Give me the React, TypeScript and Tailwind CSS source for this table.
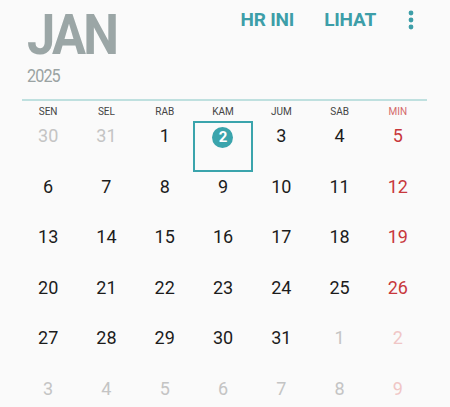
const days = ["SEN", "SEL", "RAB", "KAM", "JUM", "SAB", "MIN"];

type Cell = { n: number; muted?: boolean; today?: boolean };

const weeks: Cell[][] = [
  [{ n: 30, muted: true }, { n: 31, muted: true }, { n: 1 }, { n: 2, today: true }, { n: 3 }, { n: 4 }, { n: 5 }],
  [{ n: 6 }, { n: 7 }, { n: 8 }, { n: 9 }, { n: 10 }, { n: 11 }, { n: 12 }],
  [{ n: 13 }, { n: 14 }, { n: 15 }, { n: 16 }, { n: 17 }, { n: 18 }, { n: 19 }],
  [{ n: 20 }, { n: 21 }, { n: 22 }, { n: 23 }, { n: 24 }, { n: 25 }, { n: 26 }],
  [{ n: 27 }, { n: 28 }, { n: 29 }, { n: 30 }, { n: 31 }, { n: 1, muted: true }, { n: 2, muted: true }],
  [{ n: 3, muted: true }, { n: 4, muted: true }, { n: 5, muted: true }, { n: 6, muted: true }, { n: 7, muted: true }, { n: 8, muted: true }, { n: 9, muted: true }],
];

function numColor(c: Cell, col: number) {
  if (col === 6) return c.muted ? "text-[#f0c6c6]" : "text-[#c8383c]";
  return c.muted ? "text-[#c4c4c4]" : "text-[#1c1c1c]";
}

export default function App() {
  return (
    <div className="w-[450px] h-[407px] overflow-hidden bg-[#fafafa] font-['Roboto',sans-serif]">
      {/* header */}
      <div className="flex items-start h-[99px] pl-[27px] pr-[36px]">
        <div className="flex flex-col">
          <div className="mt-[8px] text-[55px] leading-none font-bold text-[#9ba6a6] tracking-[-3px] scale-x-[0.92] origin-left">
            JAN
          </div>
          <div className="mt-[4px] text-[18px] leading-none text-[#9aa3a3] tracking-[-1px] scale-x-[0.9] origin-left">2025</div>
        </div>
        <div className="ml-auto flex items-center gap-[30px] mt-[10px]">
          <span className="text-[19px] leading-[20px] font-bold text-[#3d9ea8] tracking-[-0.2px]">HR INI</span>
          <span className="text-[19px] leading-[20px] font-bold text-[#3d9ea8] tracking-[-0.2px]">LIHAT</span>
          <svg width="6" height="20" viewBox="0 0 6 20" className="ml-[2px]">
            <circle cx="3" cy="3" r="2.4" fill="#3d9ea8" />
            <circle cx="3" cy="10" r="2.4" fill="#3d9ea8" />
            <circle cx="3" cy="17" r="2.4" fill="#3d9ea8" />
          </svg>
        </div>
      </div>
      <div className="ml-[22px] w-[405px] h-[2px] bg-[#bfe0df]" />

      {/* grid */}
      <div className="ml-[19px] w-[408px]">
        <div className="grid grid-cols-7 h-[20px] items-center">
          {days.map((d, i) => (
            <div
              key={d}
              className={`text-center text-[10px] leading-none mt-[1px] ${i === 6 ? "text-[#d46a6a]" : "text-[#444]"}`}
            >
              {d}
            </div>
          ))}
        </div>
        {weeks.map((w, r) => (
          <div key={r} className="grid grid-cols-7 h-[50.5px]">
            {w.map((c, i) => (
              <div key={i} className="relative flex justify-center">
                {c.today ? (
                  <div className="absolute inset-y-0 -inset-x-[1px] border-2 border-[#3aa4ac] flex justify-center">
                    <div className="mt-[4px] w-[21px] h-[21px] rounded-full bg-[#3aa4ac] flex items-center justify-center text-white font-bold text-[15px] leading-none">
                      {c.n}
                    </div>
                  </div>
                ) : (
                  <span className={`mt-[5px] text-[18px] leading-[20px] ${numColor(c, i)}`}>{c.n}</span>
                )}
              </div>
            ))}
          </div>
        ))}
      </div>
    </div>
  );
}
